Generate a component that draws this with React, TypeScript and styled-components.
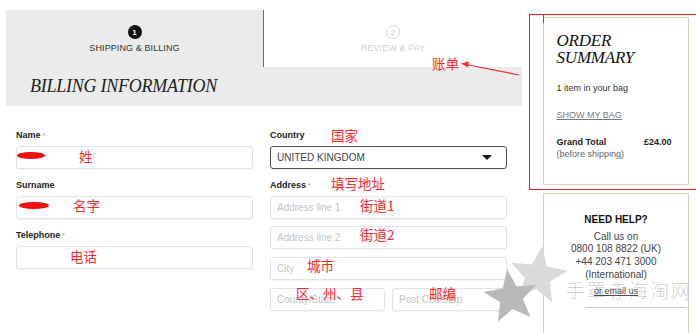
import React from "react";
import styled, { createGlobalStyle } from "styled-components";

const Global = createGlobalStyle`
  html, body { margin: 0; padding: 0; background: #fff; }
  body { font-family: "Liberation Sans", Arial, sans-serif; color: #333; width: 696px; height: 333px; overflow: hidden; }
  * { box-sizing: border-box; }
`;

const Page = styled.div`
  position: relative;
  display: flex;
  align-items: flex-start;
  padding: 10px 0 0 6px;
  width: 696px;
  height: 333px;
`;

const Main = styled.div`
  width: 516px;
  display: flex;
  flex-direction: column;
`;

const Stepper = styled.div`
  display: grid;
  grid-template-columns: 258px 1fr;
  height: 57px;
`;

const Step = styled.div<{ $active?: boolean }>`
  display: flex;
  flex-direction: column;
  align-items: center;
  padding-top: 15px;
  background: ${(p) => (p.$active ? "#ebebeb" : "#fff")};
  border-right: ${(p) => (p.$active ? "1px solid #6d6d6d" : "none")};
  color: ${(p) => (p.$active ? "#333" : "#cfcfcf")};
  font-size: 9px;
  letter-spacing: 0.1px;
`;

const Circle = styled.div<{ $active?: boolean }>`
  width: 14px;
  height: 14px;
  border-radius: 50%;
  display: flex;
  align-items: center;
  justify-content: center;
  font-size: 8px;
  font-weight: ${(p) => (p.$active ? 700 : 400)};
  background: ${(p) => (p.$active ? "#111" : "#fff")};
  color: ${(p) => (p.$active ? "#fff" : "#cfcfcf")};
  border: ${(p) => (p.$active ? "none" : "1px solid #d6d6d6")};
  margin-bottom: 4px;
`;

const Band = styled.div`
  height: 39px;
  background: #ebebeb;
  display: flex;
  align-items: center;
  padding-left: 24px;
`;

const Heading = styled.h1`
  margin: 0;
  font-family: "Liberation Serif", "Times New Roman", serif;
  font-style: italic;
  font-weight: 400;
  font-size: 18px;
  letter-spacing: -0.25px;
  color: #222;
`;

const Form = styled.div`
  display: grid;
  grid-template-columns: 237px 237px;
  column-gap: 17px;
  padding: 24px 0 0 10px;
`;

const Column = styled.div`
  display: flex;
  flex-direction: column;
`;

const Label = styled.div`
  font-size: 9px;
  font-weight: 700;
  color: #222;
  line-height: 11px;
  margin-bottom: 5px;
`;

const Star = styled.span`
  color: #e07a7a;
  font-weight: 400;
  font-size: 7px;
  vertical-align: top;
  margin-left: 2px;
`;

const Input = styled.div<{ $mb?: number }>`
  position: relative;
  height: 23px;
  border: 1px solid #e2e2e2;
  border-radius: 3px;
  box-shadow: 0 1px 1px rgba(0, 0, 0, 0.04);
  background: #fff;
  display: flex;
  align-items: center;
  padding-left: 6px;
  font-size: 10px;
  color: #c4c4c4;
  margin-bottom: ${(p) => p.$mb ?? 11}px;
`;

const Select = styled(Input)`
  border: 1px solid #4f4f4f;
  color: #444;
  justify-content: space-between;
  padding-right: 14px;
`;

const Caret = styled.span`
  width: 0;
  height: 0;
  border-left: 5px solid transparent;
  border-right: 5px solid transparent;
  border-top: 5px solid #111;
`;

const Pair = styled.div`
  display: grid;
  grid-template-columns: 115px 115px;
  column-gap: 7px;
`;

const Scribble = styled.span<{ $w: number; $x?: number }>`
  position: absolute;
  left: ${(p) => p.$x ?? 0}px;
  top: 5px;
  width: ${(p) => p.$w}px;
  height: 7px;
  border-radius: 50%;
  background: #f01010;
  filter: blur(0.6px);
`;

const Sidebar = styled.div`
  margin-left: 7px;
  margin-top: 4px;
  display: flex;
  flex-direction: column;
  width: 167px;
`;

const RedBox = styled.div`
  position: relative;
  border: 1.5px solid #ee1c1c;
  border-right: none;
  padding: 2px 5px 4px 12.5px;
`;

const Tick = styled.span`
  position: absolute;
  left: 12.5px;
  top: 0;
  width: 1.5px;
  height: 8px;
  background: #ee1c1c;
`;

const Card = styled.div`
  border: 1.5px solid #d9d2bf;
  width: 146px;
  background: #fff;
`;

const Summary = styled(Card)`
  height: 168px;
  padding: 14px 13px 0 13px;
  font-size: 9px;
  color: #333;
`;

const SumTitle = styled.div`
  font-family: "Liberation Serif", "Times New Roman", serif;
  font-style: italic;
  font-size: 17px;
  line-height: 17px;
  color: #111;
  margin-bottom: 16px;
  letter-spacing: -0.2px;
`;

const Line = styled.div<{ $mb?: number }>`
  margin-bottom: ${(p) => p.$mb ?? 0}px;
  line-height: 12px;
`;

const LinkText = styled.span<{ $dark?: boolean }>`
  color: ${(p) => (p.$dark ? "#444" : "#777")};
  text-decoration: underline;
  font-size: 9px;
`;

const TotalRow = styled.div`
  display: flex;
  justify-content: space-between;
  font-weight: 700;
  color: #222;
  padding-right: 3px;
  line-height: 12px;
`;

const Muted = styled.div`
  color: #666;
  line-height: 12px;
`;

const Help = styled(Card)`
  margin-left: 14px;
  margin-top: 3px;
  height: 140px;
  border-bottom: none;
  display: flex;
  flex-direction: column;
  align-items: center;
  padding-top: 20px;
  font-size: 10px;
  color: #444;
  line-height: 12.7px;
`;

const HelpTitle = styled.div`
  font-weight: 700;
  color: #111;
  margin-bottom: 4px;
`;

const EmailRow = styled.div`
  margin-top: 3px;
`;

const Rule = styled.div`
  align-self: flex-end;
  width: 100px;
  height: 1px;
  background: #c9c9c9;
  margin-top: 10px;
  margin-right: 2px;
`;

const Note = styled.span<{ $x: number; $y: number }>`
  position: absolute;
  left: ${(p) => p.$x}px;
  top: ${(p) => p.$y}px;
  font-family: "Noto Sans CJK SC", sans-serif;
  font-size: 13.5px;
  line-height: 16px;
  color: #f52a2a;
  white-space: nowrap;
  pointer-events: none;
`;

const Overlay = styled.svg`
  position: absolute;
  pointer-events: none;
`;

const Watermark = styled.span`
  position: absolute;
  left: 566px;
  top: 276px;
  font-family: "Noto Sans CJK SC", sans-serif;
  font-weight: 300;
  font-size: 19px;
  letter-spacing: 2px;
  color: rgba(150, 150, 150, 0.45);
  white-space: nowrap;
  pointer-events: none;
`;

const starPath = (cx: number, cy: number, R: number, r: number, rot: number) => {
  const pts: string[] = [];
  for (let i = 0; i < 10; i++) {
    const a = ((rot + i * 36 - 90) * Math.PI) / 180;
    const rad = i % 2 === 0 ? R : r;
    pts.push(`${(cx + rad * Math.cos(a)).toFixed(1)},${(cy + rad * Math.sin(a)).toFixed(1)}`);
  }
  return pts.join(" ");
};

export default function App() {
  return (
    <>
      <Global />
      <Page>
        <Main>
          <Stepper>
            <Step $active>
              <Circle $active>1</Circle>
              SHIPPING &amp; BILLING
            </Step>
            <Step>
              <Circle>2</Circle>
              REVIEW &amp; PAY
            </Step>
          </Stepper>
          <Band>
            <Heading>BILLING INFORMATION</Heading>
          </Band>
          <Form>
            <Column>
              <Label>Name<Star>*</Star></Label>
              <Input><Scribble $w={28} /></Input>
              <Label>Surname</Label>
              <Input><Scribble $w={30} $x={2} /></Input>
              <Label>Telephone<Star>*</Star></Label>
              <Input />
            </Column>
            <Column>
              <Label>Country</Label>
              <Select>
                UNITED KINGDOM
                <Caret />
              </Select>
              <Label>Address<Star>*</Star></Label>
              <Input $mb={7}>Address line 1</Input>
              <Input $mb={8}>Address line 2</Input>
              <Input $mb={8}>City</Input>
              <Pair>
                <Input>County/State</Input>
                <Input>Post Code/Zip</Input>
              </Pair>
            </Column>
          </Form>
        </Main>
        <Sidebar>
          <RedBox>
            <Tick />
            <Summary>
              <SumTitle>ORDER<br />SUMMARY</SumTitle>
              <Line $mb={15}>1 item in your bag</Line>
              <Line $mb={15}><LinkText>SHOW MY BAG</LinkText></Line>
              <TotalRow><span>Grand Total</span><span>£24.00</span></TotalRow>
              <Muted>(before shipping)</Muted>
            </Summary>
          </RedBox>
          <Help>
            <HelpTitle>NEED HELP?</HelpTitle>
            <div>Call us on</div>
            <div>0800 108 8822 (UK)</div>
            <div>+44 203 471 3000</div>
            <div>(International)</div>
            <EmailRow><LinkText $dark>or email us</LinkText></EmailRow>
            <Rule />
          </Help>
        </Sidebar>

        <Overlay width="90" height="90" viewBox="0 0 90 90" style={{ left: 478, top: 242 }}>
          <polygon points={starPath(60, 34, 30, 13, 8)} fill="#d9d9d9" />
          <polygon points={starPath(33, 55, 28, 12, -8)} fill="#b9b9b9" />
        </Overlay>
        <Watermark>手罩赤海淘网</Watermark>

        <Overlay width="70" height="20" viewBox="0 0 70 20" style={{ left: 458, top: 58 }}>
          <line x1="8" y1="6.5" x2="61" y2="17" stroke="#f52a2a" strokeWidth="1.2" />
          <polygon points="3,5.5 11,3.5 10,9.5" fill="#f52a2a" />
        </Overlay>

        <Note $x={432} $y={55}>账单</Note>
        <Note $x={79} $y={148}>姓</Note>
        <Note $x={73} $y={197}>名字</Note>
        <Note $x={70} $y={248}>电话</Note>
        <Note $x={331} $y={127}>国家</Note>
        <Note $x={331} $y={175}>填写地址</Note>
        <Note $x={360} $y={197}>街道1</Note>
        <Note $x={360} $y={226}>街道2</Note>
        <Note $x={307} $y={257}>城市</Note>
        <Note $x={296} $y={285}>区、州、县</Note>
        <Note $x={429} $y={285}>邮编</Note>
      </Page>
    </>
  );
}
